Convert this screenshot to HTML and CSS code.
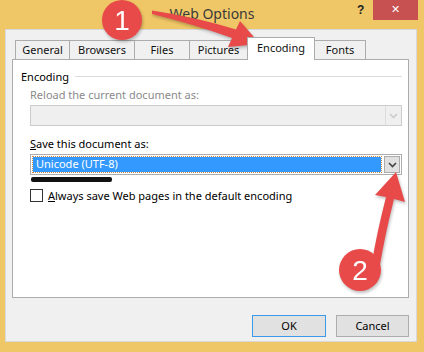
FILE: index.html
```html
<!DOCTYPE html>
<html>
<head>
    <meta charset="utf-8" />
    <title>Web Options</title>
    <link rel="stylesheet" href="styles.css">
</head>
<body>
    <div class="window">
        <div class="titlebar">
            <span class="title">Web Options</span>
            <span class="help">?</span>
            <span class="close">&#x2715;</span>
        </div>

        <div class="client">
            <div class="tabs">
                <div class="tab tab-general">General</div>
                <div class="tab tab-browsers">Browsers</div>
                <div class="tab tab-files">Files</div>
                <div class="tab tab-pictures">Pictures</div>
                <div class="tab tab-encoding active">Encoding</div>
                <div class="tab tab-fonts">Fonts</div>
            </div>

            <div class="panel">
                <div class="group-title">
                    <span>Encoding</span>
                    <div class="group-line"></div>
                </div>

                <div class="field">
                    <div class="label disabled">Reload the current document as:</div>
                    <div class="combo combo-disabled">
                        <div class="combo-value"></div>
                        <div class="combo-button">
                            <svg width="9" height="6" viewBox="0 0 9 6"><path d="M1 1 L4.5 4.5 L8 1" fill="none" stroke="#c8c8c8" stroke-width="1.5"/></svg>
                        </div>
                    </div>
                </div>

                <div class="field">
                    <div class="label label-save"><u>S</u>ave this document as:</div>
                    <div class="combo">
                        <div class="combo-value"><span class="selected">Unicode (UTF-8)</span></div>
                        <div class="combo-button active-btn">
                            <svg width="9" height="6" viewBox="0 0 9 6"><path d="M1 1 L4.5 4.5 L8 1" fill="none" stroke="#444" stroke-width="1.6"/></svg>
                        </div>
                    </div>
                    <div class="scribble"></div>
                </div>

                <label class="check">
                    <span class="box"></span>
                    <span><u>A</u>lways save Web pages in the default encoding</span>
                </label>
            </div>

            <div class="buttons">
                <div class="btn btn-default">OK</div>
                <div class="btn btn-cancel">Cancel</div>
            </div>
        </div>

        <!-- annotations drawn over the dialog -->
        <svg class="annotations" width="424" height="352" viewBox="0 0 424 352">
            <g class="mark">
                <path d="M152 10.5 Q195 17 236 29.5 L240 21 L260 44 L228 47 L232 38 Q193 24 152 14 Z" fill="#e84a4a"/>
                <circle cx="122" cy="20" r="20" fill="#e84a4a"/>
                <text x="122" y="30" class="num">1</text>
            </g>
            <g class="mark">
                <path d="M396 172 L405 202 L394 199 Q385 235 380 265 L372 262 Q377 232 386 197 L375 195 Z" fill="#e84a4a"/>
                <circle cx="360" cy="270" r="21" fill="#e84a4a"/>
                <text x="360" y="280" class="num">2</text>
            </g>
        </svg>
    </div>
</body>
</html>
```

FILE: styles.css
```css
html, body {
    margin: 0;
    padding: 0;
    background-color: #f0c766;
}

body {
    width: 424px;
    height: 352px;
    overflow: hidden;
    font-family: "Noto Sans", "Open Sans", sans-serif;
    font-size: 11px;
    color: #000;
}

.window {
    position: relative;
    width: 424px;
    height: 352px;
}

.titlebar {
    position: relative;
    height: 29px;
}

.title {
    position: absolute;
    left: 0;
    right: 0;
    top: 4px;
    text-align: center;
    font-size: 14px;
    color: #3a3a3a;
}

.help {
    position: absolute;
    left: 357px;
    top: 3px;
    font-family: "Liberation Sans", sans-serif;
    font-weight: bold;
    font-size: 12px;
    color: #222;
}

.close {
    position: absolute;
    left: 373px;
    top: 0;
    width: 45px;
    height: 20px;
    background-color: #c75050;
    color: #fff;
    font-size: 11px;
    line-height: 20px;
    text-align: center;
    font-family: "DejaVu Sans", sans-serif;
}

.client {
    margin-left: 5px;
    width: 412px;
    height: 313px;
    box-sizing: border-box;
    background-color: #f0f0f0;
    border: 1px solid #d8d8d8;
    padding: 7px 0 0 6px;
}

.tabs {
    display: flex;
    align-items: flex-end;
    height: 22px;
    padding-left: 3px;
}

.tab {
    box-sizing: border-box;
    height: 19px;
    border: 1px solid #acacac;
    border-bottom: none;
    margin-right: -1px;
    background-color: #f0f0f0;
    text-align: center;
    line-height: 18px;
    color: #111;
}

.tab-general { width: 55px; }
.tab-browsers { width: 66px; }
.tab-files { width: 56px; }
.tab-pictures { width: 59px; }
.tab-encoding { width: 68px; }
.tab-fonts { width: 52px; }

.tab.active {
    position: relative;
    z-index: 2;
    height: 23px;
    margin-bottom: -1px;
    background-color: #fff;
    line-height: 20px;
}

.panel {
    width: 397px;
    height: 239px;
    box-sizing: border-box;
    background-color: #fff;
    border: 1px solid #acacac;
    padding: 8px 6px 0 8px;
}

.group-title {
    display: flex;
    align-items: center;
    gap: 6px;
    height: 16px;
}

.group-line {
    flex: 1;
    height: 1px;
    background-color: #dcdcdc;
}

.field {
    margin-left: 9px;
}

.label {
    margin-top: 3px;
    height: 16px;
    line-height: 16px;
}

.label.disabled {
    color: #8a8a8a;
}

.label-save {
    margin-top: 10px;
}

.combo {
    display: flex;
    height: 21px;
    box-sizing: border-box;
    border: 1px solid #acacac;
    background-color: #fff;
    margin-top: 2px;
}

.combo-disabled {
    background-color: #efefef;
    border-color: #cccccc;
}

.combo-value {
    flex: 1;
    padding: 2px;
    display: flex;
}

.selected {
    flex: 1;
    background-color: #3399ff;
    color: #fff;
    line-height: 13px;
    padding-left: 3px;
    outline: 1px dotted #d08a40;
}

.combo-button {
    width: 16px;
    box-sizing: border-box;
    border-left: 1px solid #dcdcdc;
    display: flex;
    align-items: center;
    justify-content: center;
}

.active-btn {
    background-color: #e1e1e1;
    border: 1px solid #acacac;
    margin: 1px;
}

.scribble {
    margin-top: 2px;
    margin-left: 1px;
    width: 81px;
    height: 5px;
    background-color: #111;
    border-radius: 2px;
}

.check {
    display: flex;
    align-items: center;
    gap: 5px;
    height: 13px;
    margin: 7px 0 0 9px;
}

.box {
    width: 11px;
    height: 11px;
    border: 1px solid #333;
    background-color: #fff;
}

.buttons {
    display: flex;
    justify-content: flex-end;
    gap: 10px;
    width: 397px;
    margin-top: 17px;
}

.btn {
    box-sizing: border-box;
    width: 74px;
    height: 22px;
    line-height: 20px;
    text-align: center;
    background-color: #e1e1e1;
    border: 1px solid #adadad;
}

.btn-cancel {
    width: 73px;
}

.btn-default {
    border-color: #3c9be8;
}

.annotations {
    position: absolute;
    left: 0;
    top: 0;
    pointer-events: none;
}

.mark {
    filter: drop-shadow(1px 2px 1.5px rgba(0, 0, 0, 0.25));
}

.num {
    fill: #fff;
    font-family: "Liberation Sans", sans-serif;
    font-size: 28px;
    text-anchor: middle;
}
```
